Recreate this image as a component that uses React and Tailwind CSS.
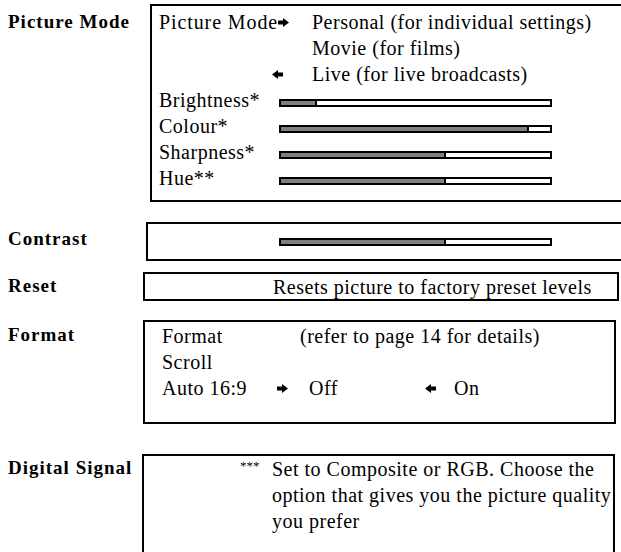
import React from "react";

function ArrowRight() {
  return (
    <svg width="11" height="9" viewBox="0 0 11 9" className="inline-block shrink-0">
      <path d="M0 2.5H5V0L11 4.5L5 9V6.5H0Z" fill="black" />
    </svg>
  );
}

function ArrowLeft() {
  return (
    <svg width="11" height="9" viewBox="0 0 11 9" className="inline-block shrink-0">
      <path d="M11 2.5H6V0L0 4.5L6 9V6.5H11Z" fill="black" />
    </svg>
  );
}

function Bar({ fill }) {
  return (
    <div className="flex h-[8px] w-[273px] border-2 border-black bg-white">
      <div className="h-full border-r-2 border-black bg-[#808080]" style={{ width: fill }} />
    </div>
  );
}

function Label({ children, w, pt }) {
  return (
    <div
      className={`${w} ${pt} shrink-0 pl-[8px] whitespace-nowrap font-['Liberation_Serif','Times_New_Roman',serif] text-[19px] font-bold tracking-[1px] leading-[26px]`}
    >
      {children}
    </div>
  );
}

export default function App() {
  const sliders = [
    { name: "Brightness*", fill: 36 },
    { name: "Colour*", fill: 248 },
    { name: "Sharpness*", fill: 165 },
    { name: "Hue**", fill: 165 },
  ];

  return (
    <div className="w-[621px] h-[552px] overflow-hidden bg-white text-black font-['Liberation_Serif','Times_New_Roman',serif] text-[20px] leading-[26px] tracking-[0.5px] whitespace-nowrap">
      {/* picture mode */}
      <div className="flex pt-[4px]">
        <Label w="w-[150px]" pt="pt-[5px]">Picture Mode</Label>
        <div className="w-[500px] shrink-0 h-[198px] border-2 border-r-0 border-black pl-[7px] pt-[3px]">
          <div className="flex">
            <div className="w-[153px] flex items-center">
              <span className="tracking-[0.9px]">Picture Mode</span>
              <ArrowRight />
            </div>
            <span>Personal (for individual settings)</span>
          </div>
          <div className="flex">
            <div className="w-[153px]" />
            <span>Movie (for films)</span>
          </div>
          <div className="flex">
            <div className="w-[153px] flex items-center justify-end pr-[29px]">
              <ArrowLeft />
            </div>
            <span>Live (for live broadcasts)</span>
          </div>
          {sliders.map((s) => (
            <div key={s.name} className="flex items-center">
              <div className="w-[120px]">{s.name}</div>
              <div className="pt-[5px]">
                <Bar fill={s.fill} />
              </div>
            </div>
          ))}
        </div>
      </div>

      {/* contrast */}
      <div className="flex mt-[20px]">
        <Label w="w-[146px]" pt="pt-[4px]">Contrast</Label>
        <div className="w-[500px] shrink-0 h-[39px] border-2 border-r-0 border-black flex items-center pl-[131px]">
          <Bar fill={165} />
        </div>
      </div>

      {/* reset */}
      <div className="flex mt-[11px]">
        <Label w="w-[143px]" pt="pt-[1px]">Reset</Label>
        <div className="w-[476px] shrink-0 h-[29px] border-2 border-black flex items-center pl-[128px]">
          Resets picture to factory preset levels
        </div>
      </div>

      {/* format */}
      <div className="flex mt-[19px]">
        <Label w="w-[143px]" pt="pt-[2px]">Format</Label>
        <div className="w-[473px] shrink-0 h-[104px] border-2 border-black pl-[17px] pt-[1px]">
          <div className="flex">
            <div className="w-[138px]">Format</div>
            <span>(refer to page 14 for details)</span>
          </div>
          <div>Scroll</div>
          <div className="flex items-center">
            <div className="w-[115px]">Auto 16:9</div>
            <ArrowRight />
            <span className="ml-[21px] w-[116px]">Off</span>
            <ArrowLeft />
            <span className="ml-[18px]">On</span>
          </div>
        </div>
      </div>

      {/* digital signal */}
      <div className="flex mt-[30px]">
        <Label w="w-[142px]" pt="pt-[1px]">Digital Signal</Label>
        <div className="w-[473px] shrink-0 h-[120px] border-2 border-black pl-[96px] pt-0 flex">
          <span className="w-[32px] shrink-0 text-[13px] leading-[20px] tracking-normal">***</span>
          <div>
            <div>Set to Composite or RGB. Choose the</div>
            <div>option that gives you the picture quality</div>
            <div>you prefer</div>
          </div>
        </div>
      </div>
    </div>
  );
}
